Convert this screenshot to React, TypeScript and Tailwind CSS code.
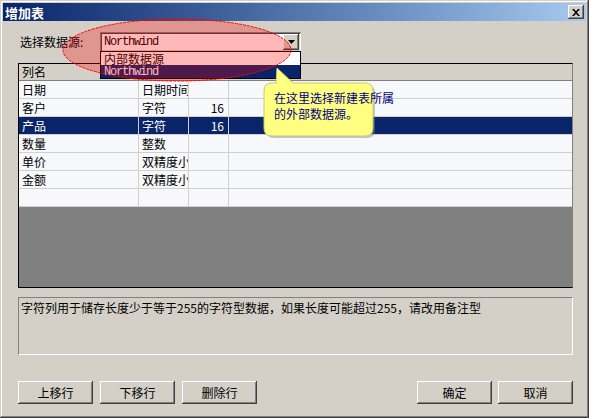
import React from 'react';

const font = { fontFamily: '"Noto Sans CJK SC", "Liberation Sans", sans-serif' };

const rows = [
  { name: '日期', type: '日期时间', len: '' },
  { name: '客户', type: '字符', len: '16' },
  { name: '产品', type: '字符', len: '16', selected: true },
  { name: '数量', type: '整数', len: '' },
  { name: '单价', type: '双精度小数', len: '' },
  { name: '金额', type: '双精度小数', len: '' },
  { name: '', type: '', len: '' },
];

const raised =
  'bg-[#d4d0c8] shadow-[inset_-1px_-1px_#404040,inset_1px_1px_#ffffff,inset_-2px_-2px_#808080,inset_2px_2px_#d4d0c8]';

const Btn = ({ label }: { label: string }) => (
  <button className={`${raised} w-[75px] h-[23px] text-[12px] text-black flex items-center justify-center`}>
    {label}
  </button>
);

const App = () => {
  return (
    <div
      className="relative w-[589px] h-[418px] bg-[#d4d0c8] overflow-hidden text-black text-[12px] leading-none flex flex-col px-[3px] pt-[3px] shadow-[inset_-1px_-1px_#404040,inset_1px_1px_#d4d0c8,inset_-2px_-2px_#808080,inset_2px_2px_#ffffff]"
      style={font}
    >
      {/* title bar */}
      <div className="h-[18px] flex items-center justify-between pl-[2px] pr-[2px] bg-gradient-to-r from-[#0a246a] to-[#a6caf0]">
        <span className="text-white font-bold text-[13px]">增加表</span>
        <div className={`${raised} w-[16px] h-[14px] flex items-center justify-center`}>
          <svg width="8" height="7" viewBox="0 0 8 7">
            <path d="M0 0h2l2 2.2L6 0h2L5 3.5 8 7H6L4 4.8 2 7H0l3-3.5z" fill="#000" />
          </svg>
        </div>
      </div>

      <div className="flex flex-col pl-[15px] w-[570px]">
        {/* data source row */}
        <div className="mt-[11px] h-[20px] flex items-center">
          <span className="w-[82px] pl-[2px]">选择数据源:</span>
          <div className="w-[201px] h-[20px] bg-white flex items-center shadow-[inset_1px_1px_#808080,inset_-1px_-1px_#ffffff,inset_2px_2px_#404040,inset_-2px_-2px_#d4d0c8]">
            <span
              className="flex-1 pl-[4px] text-[12px] tracking-[-1.2px]"
              style={{ fontFamily: '"Liberation Mono", monospace' }}
            >
              Northwind
            </span>
            <div className={`${raised} w-[16px] h-[16px] mr-[2px] flex items-center justify-center`}>
              <svg width="7" height="4" viewBox="0 0 7 4">
                <path d="M0 0h7L3.5 4z" fill="#000" />
              </svg>
            </div>
          </div>
        </div>

        {/* grid */}
        <div className="mt-[11px] h-[225px] flex flex-col bg-[#808080] border border-black border-r-[#808080] border-b-black">
          <div className="h-[17px] shrink-0 bg-[#d4d0c8] border-b border-[#808080] flex items-center pl-[3px]">列名</div>
          {rows.map((r, i) => (
            <div
              key={i}
              className={`h-[18px] shrink-0 flex border-b border-[#d4d0c8] ${
                r.selected ? 'bg-[#0a246a] text-white' : 'bg-[#f7f8fb]'
              }`}
            >
              <div className="w-[120px] pl-[3px] flex items-center border-r border-[#d4d0c8]">{r.name}</div>
              <div className="w-[50px] pl-[3px] flex items-center overflow-hidden whitespace-nowrap border-r border-[#d4d0c8]">
                {r.type}
              </div>
              <div className="w-[40px] pr-[4px] flex items-center justify-end border-r border-[#d4d0c8]">{r.len}</div>
              <div className="flex-1" />
            </div>
          ))}
        </div>

        {/* description */}
        <div className="mt-[9px] h-[58px] px-[2px] pt-[4px] border border-[#808080] border-r-white border-b-white">
          字符列用于储存长度少于等于255的字符型数据，如果长度可能超过255，请改用备注型
        </div>

        {/* buttons */}
        <div className="mt-[26px] flex items-center">
          <div className="flex gap-[7px]">
            <Btn label="上移行" />
            <Btn label="下移行" />
            <Btn label="删除行" />
          </div>
          <div className="ml-auto flex gap-[6px]">
            <Btn label="确定" />
            <Btn label="取消" />
          </div>
        </div>
      </div>

      {/* dropdown list */}
      <div className="absolute left-[100px] top-[51px] w-[201px] h-[28px] bg-white border border-black flex flex-col">
        <div className="h-[13px] pl-[3px] flex items-center text-[12px]">内部数据源</div>
        <div
          className="h-[13px] bg-[#0a246a] text-white pl-[3px] flex items-center tracking-[-1.2px]"
          style={{ fontFamily: '"Liberation Mono", monospace' }}
        >
          Northwind
        </div>
      </div>

      {/* red ellipse highlight */}
      <svg className="absolute left-0 top-0 pointer-events-none" width="589" height="418">
        <ellipse cx="177" cy="50" rx="114" ry="31" fill="rgba(255,0,0,0.28)" stroke="#ff0000" strokeWidth="1" strokeDasharray="3 1" />
      </svg>

      {/* balloon tip */}
      <div className="absolute left-[262px] top-[66px] w-[114px] h-[74px]">
        <svg className="absolute left-0 top-0" width="114" height="74">
          <path
            d="M14 17 L15 2 L31 17 H103 Q111 17 111 25 V62 Q111 70 103 70 H10 Q2 70 2 62 V25 Q2 17 10 17 Z"
            fill="#888870"
            opacity="0.45"
            transform="translate(2,2)"
          />
          <path
            d="M14 17 L15 2 L31 17 H103 Q111 17 111 25 V62 Q111 70 103 70 H10 Q2 70 2 62 V25 Q2 17 10 17 Z"
            fill="#ffff80"
            stroke="#c8c878"
            strokeWidth="1"
          />
        </svg>
        <div className="absolute left-[12px] top-[24px] text-[#000080] text-[12px] leading-[16px] whitespace-nowrap">
          在这里选择新建表所属
          <br />
          的外部数据源。
        </div>
      </div>
    </div>
  );
};

export default App;
